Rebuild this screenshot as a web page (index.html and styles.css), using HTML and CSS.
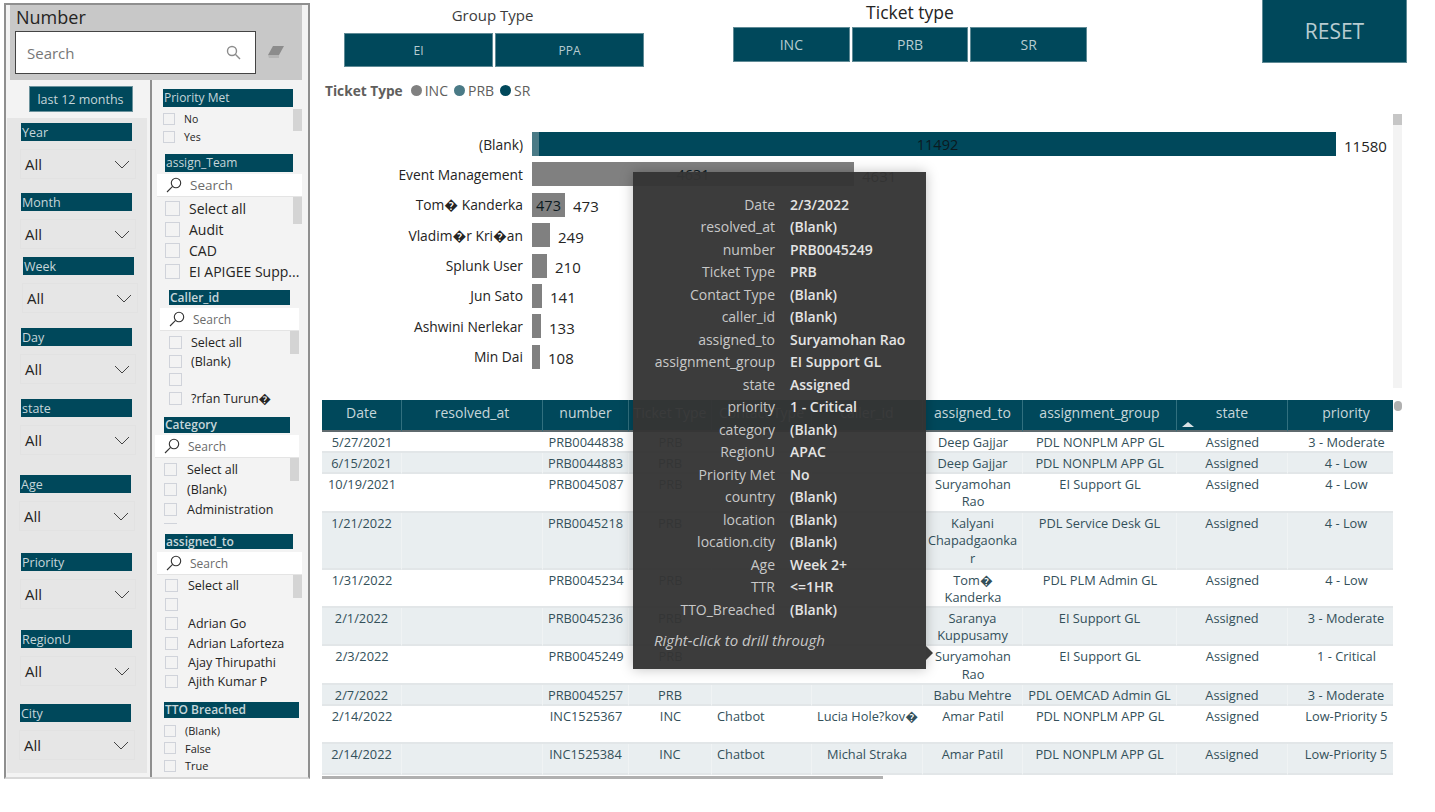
FILE: index.html
```html
<!DOCTYPE html>
<html lang="en">
<head>
    <meta charset="UTF-8">
    <title>Ticket Report</title>
    <link rel="stylesheet" href="styles.css">
</head>
<body>
<div class="page">
    <!-- Filter pane -->
    <aside class="sidebar">
        <div class="number-box">
            <div class="number-title">Number</div>
            <div class="number-row">
                <div class="number-search">
                    <span>Search</span>
                    <svg class="icon-search" width="15" height="15" viewBox="0 0 15 15"><circle cx="6" cy="6" r="4.5"/><path d="M9.3 9.3L14 14"/></svg>
                </div>
                <svg class="icon-eraser" width="18" height="14" viewBox="0 0 18 14"><path d="M6 1h11l-5 9H1z" fill="#8c8c8c"/><path d="M1 10h11v3H2z" fill="#b5b5b5"/></svg>
            </div>
        </div>
        <div class="filters">
            <div class="col-dropdowns">
                <div class="last-months"><span>last 12 months</span></div>
                <div class="dropdown-list">
                    <div class="dropdown"><div class="slicer-title">Year</div><div class="select"><span>All</span><svg width="16" height="9" viewBox="0 0 16 9"><path d="M1 1l7 7 7-7"/></svg></div></div>
                    <div class="dropdown"><div class="slicer-title">Month</div><div class="select"><span>All</span><svg width="16" height="9" viewBox="0 0 16 9"><path d="M1 1l7 7 7-7"/></svg></div></div>
                    <div class="dropdown shift-right"><div class="slicer-title">Week</div><div class="select"><span>All</span><svg width="16" height="9" viewBox="0 0 16 9"><path d="M1 1l7 7 7-7"/></svg></div></div>
                    <div class="dropdown"><div class="slicer-title">Day</div><div class="select"><span>All</span><svg width="16" height="9" viewBox="0 0 16 9"><path d="M1 1l7 7 7-7"/></svg></div></div>
                    <div class="dropdown"><div class="slicer-title">state</div><div class="select"><span>All</span><svg width="16" height="9" viewBox="0 0 16 9"><path d="M1 1l7 7 7-7"/></svg></div></div>
                    <div class="dropdown shift-left"><div class="slicer-title">Age</div><div class="select"><span>All</span><svg width="16" height="9" viewBox="0 0 16 9"><path d="M1 1l7 7 7-7"/></svg></div></div>
                    <div class="dropdown"><div class="slicer-title">Priority</div><div class="select"><span>All</span><svg width="16" height="9" viewBox="0 0 16 9"><path d="M1 1l7 7 7-7"/></svg></div></div>
                    <div class="dropdown"><div class="slicer-title">RegionU</div><div class="select"><span>All</span><svg width="16" height="9" viewBox="0 0 16 9"><path d="M1 1l7 7 7-7"/></svg></div></div>
                    <div class="dropdown shift-left"><div class="slicer-title">City</div><div class="select"><span>All</span><svg width="16" height="9" viewBox="0 0 16 9"><path d="M1 1l7 7 7-7"/></svg></div></div>
                </div>
            </div>
            <div class="col-lists">
                <section class="list-slicer priority-met">
                    <div class="slicer-title">Priority Met</div>
                    <div class="list-body">
                        <div class="scroll-thumb"></div>
                        <div class="check"><i></i>No</div>
                        <div class="check"><i></i>Yes</div>
                    </div>
                </section>
                <section class="list-slicer assign-team">
                    <div class="slicer-title">assign_Team</div>
                    <div class="list-search"><svg width="16" height="16" viewBox="0 0 16 16"><circle cx="10" cy="6" r="4.7"/><path d="M6.6 9.4L1 15"/></svg><span>Search</span></div>
                    <div class="list-body">
                        <div class="scroll-thumb"></div>
                        <div class="check"><i></i>Select all</div>
                        <div class="check"><i></i>Audit</div>
                        <div class="check"><i></i>CAD</div>
                        <div class="check"><i></i>EI APIGEE Supp...</div>
                    </div>
                </section>
                <section class="list-slicer caller-id">
                    <div class="slicer-title">Caller_id</div>
                    <div class="list-search"><svg width="16" height="16" viewBox="0 0 16 16"><circle cx="10" cy="6" r="4.7"/><path d="M6.6 9.4L1 15"/></svg><span>Search</span></div>
                    <div class="list-body">
                        <div class="scroll-thumb"></div>
                        <div class="check"><i></i>Select all</div>
                        <div class="check"><i></i>(Blank)</div>
                        <div class="check"><i></i></div>
                        <div class="check"><i></i>?rfan Turun�</div>
                    </div>
                </section>
                <section class="list-slicer category">
                    <div class="slicer-title">Category</div>
                    <div class="list-search"><svg width="16" height="16" viewBox="0 0 16 16"><circle cx="10" cy="6" r="4.7"/><path d="M6.6 9.4L1 15"/></svg><span>Search</span></div>
                    <div class="list-body">
                        <div class="scroll-thumb"></div>
                        <div class="check"><i></i>Select all</div>
                        <div class="check"><i></i>(Blank)</div>
                        <div class="check"><i></i>Administration</div>
                        <div class="check"><i></i></div>
                    </div>
                </section>
                <section class="list-slicer assigned-to">
                    <div class="slicer-title">assigned_to</div>
                    <div class="list-search"><svg width="16" height="16" viewBox="0 0 16 16"><circle cx="10" cy="6" r="4.7"/><path d="M6.6 9.4L1 15"/></svg><span>Search</span></div>
                    <div class="list-body">
                        <div class="scroll-thumb"></div>
                        <div class="check"><i></i>Select all</div>
                        <div class="check"><i></i></div>
                        <div class="check"><i></i>Adrian Go</div>
                        <div class="check"><i></i>Adrian Laforteza</div>
                        <div class="check"><i></i>Ajay Thirupathi</div>
                        <div class="check"><i></i>Ajith Kumar P</div>
                    </div>
                </section>
                <section class="list-slicer tto">
                    <div class="slicer-title">TTO Breached</div>
                    <div class="list-body">
                        <div class="check"><i></i>(Blank)</div>
                        <div class="check"><i></i>False</div>
                        <div class="check"><i></i>True</div>
                    </div>
                </section>
            </div>
        </div>
    </aside>

    <main class="main">
        <div class="top-row">
            <div class="group-type">
                <div class="group-label">Group Type</div>
                <div class="btn-row"><div class="btn">EI</div><div class="btn">PPA</div></div>
            </div>
            <div class="ticket-type">
                <div class="ticket-label">Ticket type</div>
                <div class="btn-row"><div class="btn">INC</div><div class="btn">PRB</div><div class="btn">SR</div></div>
            </div>
            <div class="reset">RESET</div>
        </div>

        <div class="legend">
            <b>Ticket Type</b>
            <span class="legend-item"><i class="dot inc"></i>INC</span>
            <span class="legend-item"><i class="dot prb"></i>PRB</span>
            <span class="legend-item"><i class="dot sr"></i>SR</span>
        </div>

        <div class="chart">
            <div class="chart-rows">
                <div class="bar-label">(Blank)</div>
                <div class="bar-row"><div class="bar prb" style="width:7px"></div><div class="bar sr" style="width:797px">11492</div><span class="bar-value">11580</span></div>
                <div class="bar-label">Event Management</div>
                <div class="bar-row"><div class="bar inc" style="width:322px">4631</div><span class="bar-value">4631</span></div>
                <div class="bar-label">Tom� Kanderka</div>
                <div class="bar-row"><div class="bar inc" style="width:33px">473</div><span class="bar-value">473</span></div>
                <div class="bar-label">Vladim�r Kri�an</div>
                <div class="bar-row"><div class="bar inc" style="width:18px"></div><span class="bar-value">249</span></div>
                <div class="bar-label">Splunk User</div>
                <div class="bar-row"><div class="bar inc" style="width:15px"></div><span class="bar-value">210</span></div>
                <div class="bar-label">Jun Sato</div>
                <div class="bar-row"><div class="bar inc" style="width:10px"></div><span class="bar-value">141</span></div>
                <div class="bar-label">Ashwini Nerlekar</div>
                <div class="bar-row"><div class="bar inc" style="width:9px"></div><span class="bar-value">133</span></div>
                <div class="bar-label">Min Dai</div>
                <div class="bar-row"><div class="bar inc" style="width:8px"></div><span class="bar-value">108</span></div>
            </div>
            <div class="chart-scroll"><div></div></div>
        </div>

        <div class="table-wrap">
            <div class="table-clip">
                <table class="tickets">
                    <colgroup>
                        <col class="c-date"><col class="c-resolved"><col class="c-number"><col class="c-type"><col class="c-contact"><col class="c-caller"><col class="c-assigned"><col class="c-group"><col class="c-state"><col class="c-priority">
                    </colgroup>
                    <thead>
                        <tr><th>Date</th><th>resolved_at</th><th>number</th><th>Ticket Type</th><th>Contact Type</th><th>caller_id</th><th>assigned_to</th><th>assignment_group</th><th class="sorted">state</th><th>priority</th></tr>
                    </thead>
                    <tbody>
                        <tr class="h21"><td>5/27/2021</td><td></td><td>PRB0044838</td><td>PRB</td><td></td><td></td><td>Deep Gajjar</td><td>PDL NONPLM APP GL</td><td>Assigned</td><td>3 - Moderate</td></tr>
                        <tr class="h20"><td>6/15/2021</td><td></td><td>PRB0044883</td><td>PRB</td><td></td><td></td><td>Deep Gajjar</td><td>PDL NONPLM APP GL</td><td>Assigned</td><td>4 - Low</td></tr>
                        <tr class="h39"><td>10/19/2021</td><td></td><td>PRB0045087</td><td>PRB</td><td></td><td></td><td>Suryamohan Rao</td><td>EI Support GL</td><td>Assigned</td><td>4 - Low</td></tr>
                        <tr class="h57"><td>1/21/2022</td><td></td><td>PRB0045218</td><td>PRB</td><td></td><td></td><td>Kalyani Chapadgaonkar</td><td>PDL Service Desk GL</td><td>Assigned</td><td>4 - Low</td></tr>
                        <tr class="h38"><td>1/31/2022</td><td></td><td>PRB0045234</td><td>PRB</td><td></td><td></td><td>Tom� Kanderka</td><td>PDL PLM Admin GL</td><td>Assigned</td><td>4 - Low</td></tr>
                        <tr class="h38"><td>2/1/2022</td><td></td><td>PRB0045236</td><td>PRB</td><td></td><td></td><td>Saranya Kuppusamy</td><td>EI Support GL</td><td>Assigned</td><td>3 - Moderate</td></tr>
                        <tr class="h39"><td>2/3/2022</td><td></td><td>PRB0045249</td><td>PRB</td><td></td><td></td><td>Suryamohan Rao</td><td>EI Support GL</td><td>Assigned</td><td>1 - Critical</td></tr>
                        <tr class="h21"><td>2/7/2022</td><td></td><td>PRB0045257</td><td>PRB</td><td></td><td></td><td>Babu Mehtre</td><td>PDL OEMCAD Admin GL</td><td>Assigned</td><td>3 - Moderate</td></tr>
                        <tr class="h38"><td>2/14/2022</td><td></td><td>INC1525367</td><td>INC</td><td class="left">Chatbot</td><td>Lucia Hole?kov�</td><td>Amar Patil</td><td>PDL NONPLM APP GL</td><td>Assigned</td><td>Low-Priority 5</td></tr>
                        <tr class="h31"><td>2/14/2022</td><td></td><td>INC1525384</td><td>INC</td><td class="left">Chatbot</td><td>Michal Straka</td><td>Amar Patil</td><td>PDL NONPLM APP GL</td><td>Assigned</td><td>Low-Priority 5</td></tr>
                    </tbody>
                </table>
            </div>
            <div class="scroll-dot"></div>
        </div>
        <div class="h-scroll"></div>

        <!-- Hover tooltip, sits over the chart and the table -->
        <div class="tooltip">
            <dl class="tip-grid">
                <dt>Date</dt><dd>2/3/2022</dd>
                <dt>resolved_at</dt><dd>(Blank)</dd>
                <dt>number</dt><dd>PRB0045249</dd>
                <dt>Ticket Type</dt><dd>PRB</dd>
                <dt>Contact Type</dt><dd>(Blank)</dd>
                <dt>caller_id</dt><dd>(Blank)</dd>
                <dt>assigned_to</dt><dd>Suryamohan Rao</dd>
                <dt>assignment_group</dt><dd>EI Support GL</dd>
                <dt>state</dt><dd>Assigned</dd>
                <dt>priority</dt><dd>1 - Critical</dd>
                <dt>category</dt><dd>(Blank)</dd>
                <dt>RegionU</dt><dd>APAC</dd>
                <dt>Priority Met</dt><dd>No</dd>
                <dt>country</dt><dd>(Blank)</dd>
                <dt>location</dt><dd>(Blank)</dd>
                <dt>location.city</dt><dd>(Blank)</dd>
                <dt>Age</dt><dd>Week 2+</dd>
                <dt>TTR</dt><dd>&lt;=1HR</dd>
                <dt>TTO_Breached</dt><dd>(Blank)</dd>
            </dl>
            <div class="tip-note">Right-click to drill through</div>
            <div class="tip-arrow"></div>
        </div>
    </main>
</div>
</body>
</html>
```

FILE: styles.css
```css
/* Global styles */
body {
    font-family: "Open Sans", "Liberation Sans", sans-serif;
    margin: 0;
    background: #fff;
    color: #252423;
    overflow: hidden;
}
.page {
    display: flex;
    align-items: flex-start;
    width: 1435px;
    height: 812px;
}

/* Sidebar */
.sidebar {
    box-sizing: border-box;
    width: 306px;
    height: 776px;
    margin: 3px 0 0 4px;
    border: 2px solid #8f8f8f;
    border-bottom-color: #d8d8d8;
    background: #f3f3f3;
}
.number-box {
    height: 75px;
    margin: 0 6px 0 4px;
    padding: 0 5px;
    background: #c8c8c8;
}
.number-title {
    padding-left: 1px;
    font-size: 18px;
    line-height: 24px;
    color: #252423;
}
.number-row {
    display: flex;
    align-items: center;
    margin-top: 2px;
}
.number-search {
    box-sizing: border-box;
    display: flex;
    align-items: center;
    justify-content: space-between;
    width: 241px;
    height: 43px;
    padding: 0 14px 0 11px;
    background: #fff;
    border: 1px solid #444;
    font-size: 15px;
    color: #777;
}
.icon-search circle,
.icon-search path {
    fill: none;
    stroke: #8c8c8c;
    stroke-width: 1.4;
}
.icon-eraser {
    margin: 0 0 2px 11px;
}
.filters {
    display: flex;
    height: 697px;
}
.col-dropdowns {
    box-sizing: border-box;
    width: 144px;
    padding: 0 0 0 1px;
}
.col-lists {
    flex: 1;
    border-left: 2px solid #8f8f8f;
    padding-top: 9px;
    display: grid;
    grid-template-rows: 65px 136px 127px 117px 168px 70px;
}
.last-months {
    display: flex;
    justify-content: center;
    padding: 6px 0 0 4px;
    height: 32px;
}
.last-months span {
    box-sizing: border-box;
    width: 104px;
    height: 26px;
    line-height: 25px;
    text-align: center;
    font-size: 12.5px;
    background: #00485b;
    color: #c6d6da;
    border: 1px solid #6b929c;
}
.dropdown-list {
    display: grid;
    grid-template-rows: 70px 64px 71px 71px 76px 78px 77px 74px 74px;
}
.dropdown {
    box-sizing: border-box;
    background: #e6e6e6;
    margin-right: 3px;
    padding: 5px 0 0 14px;
}
.dropdown.shift-right {
    padding-left: 16px;
}
.dropdown.shift-left {
    padding-left: 13px;
}
.dropdown .slicer-title {
    width: 111px;
    height: 18px;
    line-height: 19px;
}
.slicer-title {
    box-sizing: border-box;
    background: #00485b;
    color: #c6d6da;
    font-size: 12.5px;
    padding-left: 1px;
    white-space: nowrap;
    overflow: hidden;
}
.select {
    box-sizing: border-box;
    display: flex;
    align-items: center;
    justify-content: space-between;
    width: 116px;
    height: 30px;
    margin: 8px 0 0 -1px;
    padding: 0 5px 0 4px;
    border: 1px solid #e2e2e2;
    font-size: 15px;
    color: #252423;
}
.select svg path {
    fill: none;
    stroke: #444;
    stroke-width: 1;
}

/* List slicers */
.list-slicer {
    position: relative;
    min-height: 0;
}
.list-slicer .slicer-title {
    height: 18px;
    line-height: 18px;
}
.list-search {
    display: flex;
    align-items: center;
    gap: 8px;
    height: 22px;
    margin-top: 2px;
    background: #fff;
    border-bottom: 1px solid #e4e4e4;
    font-size: 13px;
    color: #6b6b6b;
}
.list-search svg {
    margin-left: 9px;
}
.list-search circle,
.list-search path {
    fill: none;
    stroke: #333;
    stroke-width: 1.1;
}
.list-body {
    position: relative;
    overflow: hidden;
}
.scroll-thumb {
    position: absolute;
    top: 0;
    right: 0;
    width: 9px;
    background: #d4d4d4;
}
.check {
    display: flex;
    align-items: center;
    white-space: nowrap;
    color: #252423;
}
.check i {
    box-sizing: border-box;
    flex: none;
    border: 1px solid #d0d3da;
    background: #f3f3f3;
}

.priority-met .slicer-title {
    width: 130px;
    margin-left: 11px;
    font-size: 12px;
}
.priority-met .list-body {
    margin-top: 2px;
    margin-left: 11px;
    width: 139px;
    padding-top: 1px;
}
.priority-met .scroll-thumb {
    height: 22px;
}
.priority-met .check {
    height: 18px;
    font-size: 10.5px;
}
.priority-met .check i {
    width: 12px;
    height: 12px;
    margin-right: 9px;
}
.assign-team .slicer-title {
    width: 128px;
    margin-left: 13px;
    font-size: 12px;
}
.assign-team .list-search {
    margin-left: 5px;
    width: 145px;
    font-size: 13.5px;
}
.assign-team .list-body {
    margin-left: 13px;
    width: 137px;
    padding-top: 1px;
}
.assign-team .scroll-thumb {
    height: 27px;
}
.assign-team .check {
    height: 21px;
    font-size: 14px;
}
.assign-team .check i {
    width: 15px;
    height: 15px;
    margin-right: 9px;
}
.caller-id .slicer-title {
    width: 121px;
    height: 15px;
    line-height: 15px;
    margin: 0 0 3px 17px;
    font-size: 12px;
    font-weight: 600;
}
.caller-id .list-search {
    margin-left: 8px;
    width: 139px;
    font-size: 12px;
}
.caller-id .list-body {
    margin-left: 17px;
    width: 130px;
    padding-top: 2px;
}
.caller-id .scroll-thumb {
    height: 23px;
}
.caller-id .check {
    height: 18.7px;
    font-size: 12.5px;
}
.caller-id .check i {
    width: 13px;
    height: 13px;
    margin-right: 9px;
}
.category .slicer-title {
    width: 126px;
    height: 16px;
    line-height: 16px;
    margin: 0 0 0 12px;
    font-size: 12px;
    font-weight: 600;
}
.category .list-search {
    margin-left: 3px;
    width: 144px;
    font-size: 12px;
}
.category .list-body {
    margin-left: 12px;
    width: 135px;
    height: 65px;
    padding-top: 1px;
}
.category .scroll-thumb {
    height: 23px;
}
.category .check {
    height: 20px;
    font-size: 12.5px;
}
.category .check i {
    width: 13px;
    height: 13px;
    margin-right: 10px;
}
.assigned-to .slicer-title {
    width: 128px;
    height: 15px;
    line-height: 15px;
    margin: 0 0 3px 13px;
    font-size: 12px;
    font-weight: 600;
}
.assigned-to .list-search {
    margin-left: 5px;
    width: 145px;
    font-size: 12px;
}
.assigned-to .list-body {
    margin-left: 13px;
    width: 137px;
    padding-top: 1px;
}
.assigned-to .scroll-thumb {
    height: 23px;
}
.assigned-to .check {
    height: 19.2px;
    font-size: 12.5px;
}
.assigned-to .check i {
    width: 13px;
    height: 13px;
    margin-right: 10px;
}
.tto .slicer-title {
    width: 135px;
    height: 16px;
    line-height: 16px;
    margin-left: 12px;
    font-size: 12px;
    font-weight: 600;
}
.tto .list-body {
    margin-left: 12px;
    padding-top: 4px;
}
.tto .check {
    height: 17.5px;
    font-size: 11px;
}
.tto .check i {
    width: 12px;
    height: 12px;
    margin-right: 9px;
}

/* Main area */
.main {
    position: relative;
    width: 1113px;
    margin-left: 12px;
}
.top-row {
    display: flex;
    height: 80px;
    padding-left: 22px;
}
.group-label,
.ticket-label {
    text-align: center;
}
.group-label {
    box-sizing: border-box;
    height: 33px;
    padding: 5px 3px 0 0;
    font-size: 15px;
    line-height: 20px;
    color: #3c3c3c;
}
.group-type {
    width: 300px;
}
.group-type .btn {
    height: 34px;
    flex: 1;
    font-size: 12px;
}
.ticket-type {
    width: 354px;
    margin-left: 89px;
}
.ticket-label {
    font-size: 17.5px;
    height: 27px;
    line-height: 24px;
    color: #252423;
}
.ticket-type .btn {
    height: 35px;
    flex: 1;
    font-size: 14px;
}
.btn-row {
    display: flex;
    gap: 2px;
}
.btn {
    box-sizing: border-box;
    display: flex;
    align-items: center;
    justify-content: center;
    background: #00485b;
    color: #b8ccd1;
    border: 1px solid #5f8a95;
}
.reset {
    box-sizing: border-box;
    width: 145px;
    height: 63px;
    margin-left: 175px;
    line-height: 62px;
    text-align: center;
    font-size: 21px;
    background: #00485b;
    color: #b8ccd1;
    border: 1px solid #5f8a95;
    border-top: 0;
}
.legend {
    display: flex;
    align-items: center;
    height: 21px;
    padding-left: 3px;
    font-size: 14px;
    color: #605e5c;
}
.legend b {
    font-size: 13.7px;
    font-weight: 700;
    margin-right: 8px;
}
.legend-item {
    display: flex;
    align-items: center;
    margin-right: 6px;
}
.dot {
    width: 11px;
    height: 11px;
    border-radius: 50%;
    margin-right: 3px;
}
.dot.inc { background: #808080; }
.dot.prb { background: #4a7a86; }
.dot.sr { background: #00485b; }

/* Bar chart */
.chart {
    display: flex;
    height: 274px;
    margin-top: 13px;
}
.chart-rows {
    width: 1071px;
    padding-top: 18px;
    display: grid;
    grid-template-columns: 201px 1fr;
    grid-auto-rows: 24px;
    column-gap: 9px;
    row-gap: 6.4px;
    align-items: center;
}
.bar-label {
    text-align: right;
    font-size: 13.8px;
    white-space: nowrap;
    color: #252423;
}
.bar-row {
    display: flex;
    align-items: center;
    height: 24px;
}
.bar {
    height: 24px;
    line-height: 25px;
    text-align: center;
    font-size: 14.5px;
    color: #0b1a1f;
}
.bar.inc { background: #808080; }
.bar.prb { background: #4a7a86; }
.bar.sr { background: #00485b; }
.bar-value {
    margin: 3px 0 0 8px;
    font-size: 15px;
    color: #252423;
}
.chart-scroll {
    width: 9px;
    background: #f3f3f3;
}
.chart-scroll div {
    height: 11px;
    background: #c6c6c6;
}

/* Table */
.table-wrap {
    display: flex;
    margin-top: 12px;
}
.table-clip {
    width: 1071px;
    overflow: hidden;
}
.tickets {
    table-layout: fixed;
    border-collapse: separate;
    border-spacing: 0;
    width: 1083px;
    font-size: 12.8px;
    color: #33505a;
}
.c-date { width: 80px; }
.c-resolved { width: 141px; }
.c-number { width: 86px; }
.c-type { width: 83px; }
.c-contact { width: 100px; }
.c-caller { width: 111px; }
.c-assigned { width: 100px; }
.c-group { width: 154px; }
.c-state { width: 111px; }
.c-priority { width: 117px; }
.tickets th {
    position: relative;
    height: 32px;
    padding: 3px 0 0;
    box-sizing: border-box;
    vertical-align: top;
    font-weight: 400;
    font-size: 14px;
    background: #00485b;
    color: #c6d6da;
    border-right: 1px solid #31707f;
    border-bottom: 2px solid #5f6a6e;
    white-space: nowrap;
}
.tickets th.sorted::after {
    content: "";
    position: absolute;
    left: 5px;
    bottom: 3px;
    border-left: 6px solid transparent;
    border-right: 6px solid transparent;
    border-bottom: 5px solid #d8e2e5;
}
.tickets td {
    box-sizing: border-box;
    padding: 2px 4px 0;
    vertical-align: top;
    text-align: center;
    line-height: 17.6px;
    border-bottom: 1px solid #e2e6e8;
    box-shadow: inset 0 -1px 0 #e2e6e8;
    overflow-wrap: anywhere;
}
.tickets td.left {
    padding-left: 5px;
    text-align: left;
}
.tickets tbody tr:nth-child(even) td {
    background: #e9eef0;
    border-right: 1px solid #f0f3f4;
}
.h20 td { height: 20px; }
.h21 td { height: 21px; }
.h31 td { height: 31px; }
.h38 td { height: 38px; }
.h39 td { height: 39px; }
.h57 td { height: 57px; }
.scroll-dot {
    width: 8px;
    height: 10px;
    margin: 1px 0 0 1px;
    border-radius: 4px;
    background: #b0b0b0;
}
.h-scroll {
    width: 561px;
    height: 3px;
    margin-top: 1px;
    background: #b0b0b0;
}

/* Tooltip */
.tooltip {
    position: absolute;
    left: 311px;
    top: 172px;
    box-sizing: border-box;
    width: 293px;
    height: 497px;
    padding-top: 21px;
    background: rgba(52, 52, 52, 0.96);
    box-shadow: 0 0 12px rgba(0, 0, 0, 0.25);
    font-size: 14px;
    color: #c8c8c8;
}
.tip-grid {
    display: grid;
    grid-template-columns: 142px 1fr;
    column-gap: 15px;
    grid-auto-rows: 22.5px;
    margin: 0;
    align-items: center;
}
.tip-grid dt {
    text-align: right;
    white-space: nowrap;
}
.tip-grid dd {
    margin: 0;
    font-weight: 600;
    color: #e4e4e4;
    white-space: nowrap;
}
.tip-note {
    margin: 9px 0 0 21px;
    font-size: 15px;
    font-style: italic;
    color: #c8c8c8;
}
.tip-arrow {
    position: absolute;
    right: -7px;
    top: 474px;
    border-top: 7px solid transparent;
    border-bottom: 7px solid transparent;
    border-left: 7px solid #3a3a3a;
}
```
